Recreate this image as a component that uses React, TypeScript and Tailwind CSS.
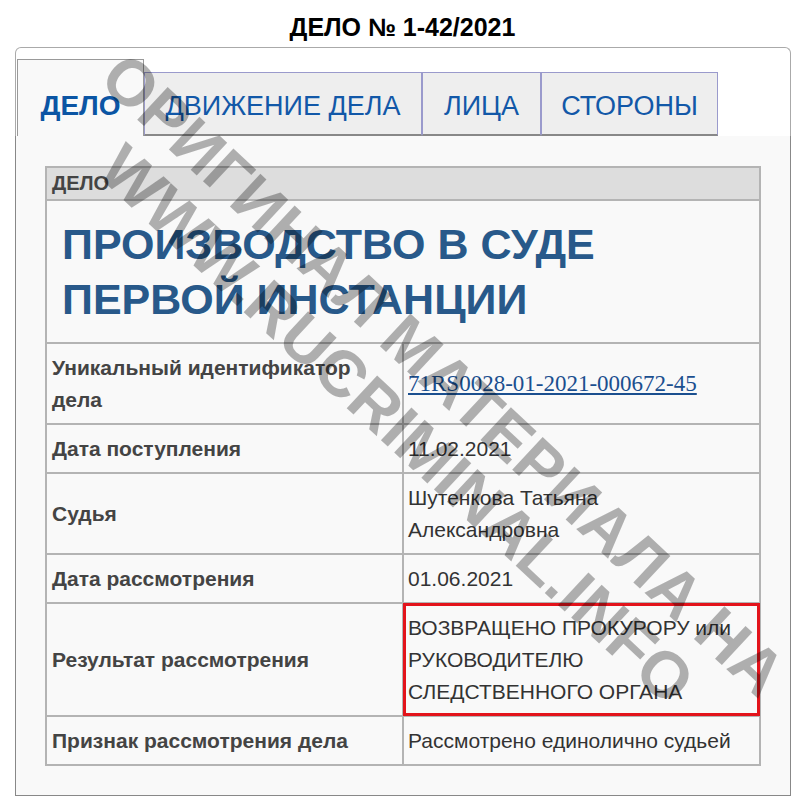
const rows: { label: React.ReactNode; value: React.ReactNode; red?: boolean }[] = [
  {
    label: (
      <>
        Уникальный идентификатор
        <br />
        дела
      </>
    ),
    value: (
      <a href="#" className="font-['Liberation_Serif',serif] text-[23px] text-[#1b4f8f] underline">
        71RS0028-01-2021-000672-45
      </a>
    ),
  },
  { label: "Дата поступления", value: "11.02.2021" },
  {
    label: "Судья",
    value: (
      <>
        Шутенкова Татьяна
        <br />
        Александровна
      </>
    ),
  },
  { label: "Дата рассмотрения", value: "01.06.2021" },
  {
    label: "Результат рассмотрения",
    value: (
      <>
        ВОЗВРАЩЕНО ПРОКУРОРУ или
        <br />
        РУКОВОДИТЕЛЮ
        <br />
        СЛЕДСТВЕННОГО ОРГАНА
      </>
    ),
    red: true,
  },
  { label: "Признак рассмотрения дела", value: "Рассмотрено единолично судьей" },
];

const tabs = ["ДВИЖЕНИЕ ДЕЛА", "ЛИЦА", "СТОРОНЫ"];
const tabWidths = ["w-[278px]", "w-[119px]", "w-[177px]"];

export default function App() {
  return (
    <div className="relative min-h-screen overflow-hidden bg-white font-['Liberation_Sans',Arial,sans-serif]">
      <h1 className="pl-[5px] pt-[12px] text-center text-[25px] font-bold leading-[30px] text-black">
        ДЕЛО № 1-42/2021
      </h1>

      <div className="ml-[15px] mt-[5px] w-[776px] rounded-t-[6px] border border-b-0 border-[#aaa]">
        {/* tabs */}
        <div className="flex items-end pl-px pt-[11px]">
          <div className="flex h-[77px] w-[127px] items-end justify-center border border-b-0 border-[#999] bg-[#f9f9f9] pb-[15px] text-[28px] font-bold leading-[30px] text-[#0b55a4]">
            ДЕЛО
          </div>
          {tabs.map((t, i) => (
            <div
              key={t}
              className={`flex h-[64px] items-end justify-center border border-b-2 border-[#9a9acc] border-b-[#888] bg-[#eee] pb-[13px] text-[27px] leading-[30px] text-[#1258a8] ${tabWidths[i]}`}
            >
              {t}
            </div>
          ))}
        </div>

        {/* panel */}
        <div className="-mx-px border border-t-0 border-[#888] bg-[#f9f9f9] px-[29px] pb-[29px] pt-[30px]">
          <table className="w-full table-fixed border-collapse border-2 border-[#b4b4b4] text-[21px] leading-[32px]">
            <tbody>
              <tr>
                <td colSpan={2} className="border-2 border-[#b4b4b4] bg-[#ddd] px-[5px] py-0 text-[20px] font-bold leading-[31px] text-[#444]">
                  ДЕЛО
                </td>
              </tr>
              <tr>
                <td colSpan={2} className="border-2 border-[#b4b4b4] px-[15px] pb-[15px] pt-[16px] text-[43px] font-bold leading-[55px] text-[#28598a]">
                  ПРОИЗВОДСТВО В СУДЕ
                  <br />
                  ПЕРВОЙ ИНСТАНЦИИ
                </td>
              </tr>
              {rows.map((r, i) => (
                <tr key={i}>
                  <td className="border-2 border-[#b4b4b4] px-[5px] pb-[7px] pt-[8px] align-middle font-bold text-[#444]">
                    {r.label}
                  </td>
                  <td className="relative border-2 border-[#b4b4b4] pb-[7px] pl-[4px] pr-[5px] pt-[8px] align-middle text-[#333]">
                    {r.value}
                    {r.red && <span className="absolute -inset-px border-[3px] border-[#e3131b]" />}
                  </td>
                </tr>
              ))}
            </tbody>
          </table>
        </div>
      </div>

      {/* watermark */}
      <div className="pointer-events-none absolute left-[420px] top-[400px] -translate-x-1/2 -translate-y-1/2 rotate-[43deg] whitespace-nowrap text-center text-[65px] font-bold leading-[68px] text-black/30">
        <div>ОРИГИНАЛ МАТЕРИАЛА НА</div>
        <div>WWW.RUCRIMINAL.INFO</div>
      </div>
    </div>
  );
}
